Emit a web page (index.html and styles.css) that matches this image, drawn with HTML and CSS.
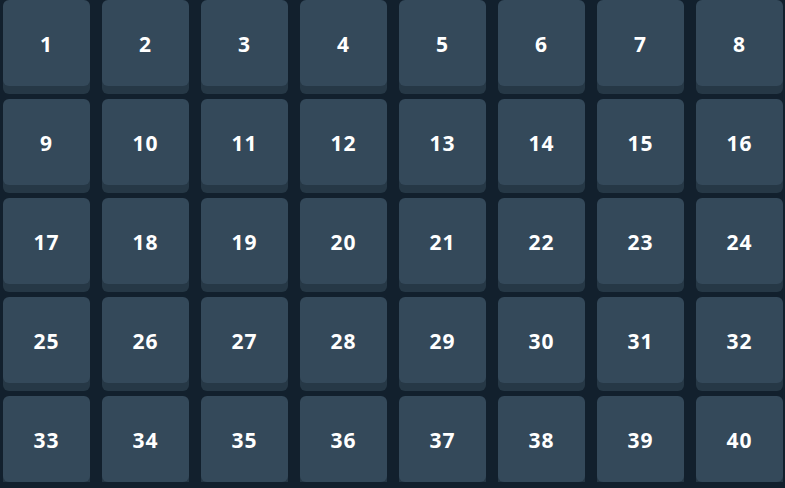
FILE: index.html
```html
<!DOCTYPE html>
<html lang="en">
<head>
  <meta charset="UTF-8" />
  <title>Levels</title>
  <link rel="stylesheet" href="styles.css">
</head>
<body>
  <div class="levels" id="levels"></div>

  <script>
    const grid = document.getElementById("levels");
    for (let i = 1; i <= 40; i++) {
      const btn = document.createElement("button");
      btn.className = "level";
      btn.textContent = i;
      grid.appendChild(btn);
    }
  </script>
</body>
</html>
```

FILE: styles.css
```css
body {
  margin: 0;
  background: #12202d;
  font-family: "Open Sans", Lato, sans-serif;
  overflow: hidden;
}
.levels {
  display: grid;
  grid-template-columns: repeat(8, 87px);
  grid-auto-rows: 86px;
  column-gap: 12px;
  row-gap: 13px;
  padding: 0 0 0 3px;
}
.level {
  border: none;
  border-radius: 6px;
  background: #34495a;
  box-shadow: 0 8px 0 #263846;
  color: #ffffff;
  font-family: inherit;
  font-weight: 700;
  font-size: 21px;
  letter-spacing: 1px;
  padding: 2px 0 0;
  cursor: pointer;
}
```
